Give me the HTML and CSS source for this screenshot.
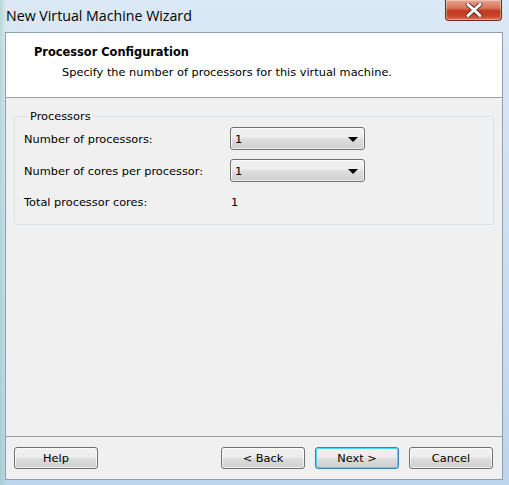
FILE: index.html
```html
<!DOCTYPE html>
<html>
<head>
<meta charset="utf-8">
<link rel="stylesheet" href="styles.css">
</head>
<body>
<div class="window">
  <div class="titlebar">
    <span class="title">New Virtual Machine Wizard</span>
    <button class="close" aria-label="Close">
      <svg width="20" height="14" viewBox="0 0 20 14">
        <path d="M4 1.5 L16 12.5 M16 1.5 L4 12.5" stroke="#5a2a20" stroke-width="4.6" stroke-linecap="round"/>
        <path d="M4 1.5 L16 12.5 M16 1.5 L4 12.5" stroke="#ffffff" stroke-width="3" stroke-linecap="round"/>
      </svg>
    </button>
  </div>
  <div class="client">
    <div class="header">
      <div class="heading">Processor Configuration</div>
      <div class="subheading">Specify the number of processors for this virtual machine.</div>
    </div>
    <div class="body">
      <fieldset class="group">
        <legend>Processors</legend>
        <div class="row">
          <span class="label">Number of processors:</span>
          <div class="select"><span>1</span><span class="arrow"></span></div>
        </div>
        <div class="row">
          <span class="label">Number of cores per processor:</span>
          <div class="select"><span>1</span><span class="arrow"></span></div>
        </div>
        <div class="row total">
          <span class="label">Total processor cores:</span>
          <span class="value">1</span>
        </div>
      </fieldset>
    </div>
    <div class="footer">
      <button class="btn">Help</button>
      <div class="spacer"></div>
      <button class="btn">&lt; Back</button>
      <button class="btn default">Next &gt;</button>
      <button class="btn">Cancel</button>
    </div>
  </div>
</div>
</body>
</html>
```
FILE: styles.css
```css
* { box-sizing: border-box; }

html, body {
  margin: 0;
  padding: 0;
}

body {
  width: 509px;
  height: 485px;
  overflow: hidden;
  font-family: "DejaVu Sans", "Liberation Sans", sans-serif;
  font-size: 11.35px;
  color: #000;
}

.window {
  width: 509px;
  height: 485px;
  display: flex;
  flex-direction: column;
  background:
    linear-gradient(90deg, rgba(120,190,150,0.35) 0px, rgba(255,255,255,0) 6px),
    linear-gradient(180deg, #dbe8f5 0%, #cfe1f3 40%, #bcd6ee 100%);
}

.titlebar {
  height: 32px;
  display: flex;
  align-items: flex-start;
  justify-content: space-between;
  padding-left: 6px;
  flex: none;
}

.title {
  font-family: "Open Sans", "Liberation Sans", sans-serif;
  font-size: 14.2px;
  line-height: 16px;
  margin-top: 8px;
  color: #000;
}

.close {
  width: 57px;
  height: 21px;
  margin-right: 7px;
  padding: 0;
  border: 1px solid #6b2b22;
  border-top: none;
  border-radius: 0 0 4px 4px;
  background: linear-gradient(180deg, #e8a593 0%, #d8735c 40%, #c2381c 55%, #c8462a 80%, #d77a5e 100%);
  box-shadow: inset 0 0 0 1px rgba(255,255,255,0.35);
  display: flex;
  align-items: center;
  justify-content: center;
}

.client {
  flex: 1;
  margin: 0 6px 5px 5px;
  border: 1px solid #8e9fb1;
  background: #f0f0f0;
  display: flex;
  flex-direction: column;
}

.header {
  height: 65px;
  background: #fff;
  border-bottom: 1px solid #a0a0a0;
  padding: 12px 0 0 28px;
  flex: none;
}

.heading {
  font-weight: bold;
  font-size: 11.4px;
  line-height: 14px;
}

.subheading {
  margin: 6px 0 0 28px;
  line-height: 14px;
}

.body {
  flex: 1;
  padding: 11px 8px 0 8px;
}

.group {
  margin: 0;
  padding: 0 10px 9px 9px;
  border: 1px solid #d9e0e6;
  border-radius: 3px;
  height: 116px;
}

.group legend {
  padding: 0 2px 0 1px;
  margin-left: 5px;
  line-height: 14px;
}

.row {
  display: flex;
  align-items: center;
  height: 23px;
  margin-top: 9px;
}

.row:first-of-type {
  margin-top: 4px;
}

.label {
  width: 206px;
  flex: none;
}

.select {
  width: 135px;
  height: 23px;
  border: 1px solid #707070;
  border-radius: 3px;
  background: linear-gradient(180deg, #f2f2f2 0%, #ebebeb 48%, #dddddd 52%, #cfcfcf 100%);
  box-shadow: inset 0 0 0 1px rgba(255,255,255,0.7);
  display: flex;
  align-items: center;
  justify-content: space-between;
  padding: 0 6px 0 4px;
}

.arrow {
  width: 0;
  height: 0;
  border-left: 5px solid transparent;
  border-right: 5px solid transparent;
  border-top: 5px solid #000;
  margin-top: 1px;
}

.row.total {
  margin-top: 8px;
}

.value {
  padding-left: 1px;
}

.footer {
  height: 43px;
  flex: none;
  border-top: 1px solid #a0a0a0;
  display: flex;
  align-items: flex-start;
  padding: 10px 9px 0 8px;
  gap: 10px;
}

.spacer { flex: 1; }

.btn {
  width: 84px;
  height: 22px;
  font-family: "DejaVu Sans", "Liberation Sans", sans-serif;
  font-size: 11.35px;
  color: #000;
  border: 1px solid #707070;
  border-radius: 3px;
  background: linear-gradient(180deg, #f2f2f2 0%, #ebebeb 48%, #dddddd 52%, #cfcfcf 100%);
  box-shadow: inset 0 0 0 1px rgba(255,255,255,0.7);
  padding: 0;
}

.btn.default {
  border-color: #3c7fb1;
  box-shadow: inset 0 0 0 1px #48d8fb;
}
```
